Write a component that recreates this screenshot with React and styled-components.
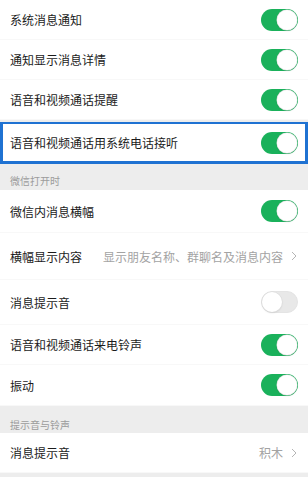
import React from 'react'
import styled, { createGlobalStyle } from 'styled-components'

const GlobalStyle = createGlobalStyle`
  html, body {
    margin: 0;
    padding: 0;
    background: #ededed;
  }
  body {
    font-family: "Noto Sans CJK SC", "Noto Sans", sans-serif;
    -webkit-font-smoothing: antialiased;
  }
`

const Page = styled.div`
  width: 308px;
  height: 477px;
  overflow: hidden;
  background: #ededed;
`

const Row = styled.div`
  box-sizing: border-box;
  height: ${p => p.h || 40}px;
  display: flex;
  align-items: center;
  justify-content: space-between;
  padding: 0 10px;
  background: #fff;
  border-bottom: 1px solid #f8f8f8;
`

const HighlightRow = styled(Row)`
  height: 42px;
  margin-top: 2px;
  padding: 0 7px;
  border: 3px solid #1f72d2;
  border-top-width: 2.5px;
`

const Label = styled.span`
  font-size: 12px;
  color: #1b1b1b;
  white-space: nowrap;
`

const Value = styled.span`
  display: flex;
  align-items: center;
  gap: 8px;
  font-size: 12px;
  color: #a3a3a3;
  white-space: nowrap;
  margin-right: 1px;
`

const Header = styled.div`
  box-sizing: border-box;
  height: ${p => p.h || 26}px;
  padding: ${p => p.pt || 10}px 10px 0;
  font-size: 10px;
  line-height: 14px;
  color: #9c9c9c;
  background: #ededed;
`

const Track = styled.div`
  position: relative;
  box-sizing: border-box;
  width: 37px;
  height: 22px;
  border-radius: 11px;
  background: ${p => (p.on ? '#1ab15b' : '#e8e8e8')};
  border: ${p => (p.on ? 'none' : '1px solid #e4e4e4')};
`

const Knob = styled.div`
  position: absolute;
  top: ${p => (p.on ? 1 : 0)}px;
  ${p => (p.on ? 'right: 1px;' : 'left: 0;')}
  width: 20px;
  height: 20px;
  border-radius: 50%;
  background: #fff;
  box-shadow: 0 0 0 0.5px #dcdcdc, 0 1px 2px rgba(0, 0, 0, 0.12);
`

const Toggle = ({ on }) => (
  <Track on={on}>
    <Knob on={on} />
  </Track>
)

const Chevron = () => (
  <svg width="6" height="10" viewBox="0 0 6 10">
    <path d="M1 1 L5 5 L1 9" fill="none" stroke="#b5b5b5" strokeWidth="1" />
  </svg>
)

const App = () => (
  <Page>
    <GlobalStyle />
    <Row h={40}>
      <Label>系统消息通知</Label>
      <Toggle on />
    </Row>
    <Row h={40}>
      <Label>通知显示消息详情</Label>
      <Toggle on />
    </Row>
    <Row h={40}>
      <Label>语音和视频通话提醒</Label>
      <Toggle on />
    </Row>
    <HighlightRow>
      <Label>语音和视频通话用系统电话接听</Label>
      <Toggle on />
    </HighlightRow>
    <Header h={26} pt={10}>微信打开时</Header>
    <Row h={43}>
      <Label>微信内消息横幅</Label>
      <Toggle on />
    </Row>
    <Row h={47}>
      <Label>横幅显示内容</Label>
      <Value>
        显示朋友名称、群聊名及消息内容
        <Chevron />
      </Value>
    </Row>
    <Row h={45}>
      <Label>消息提示音</Label>
      <Toggle />
    </Row>
    <Row h={40}>
      <Label>语音和视频通话来电铃声</Label>
      <Toggle on />
    </Row>
    <Row h={41}>
      <Label>振动</Label>
      <Toggle on />
    </Row>
    <Header h={27} pt={12}>提示音与铃声</Header>
    <Row h={40}>
      <Label>消息提示音</Label>
      <Value>
        积木
        <Chevron />
      </Value>
    </Row>
  </Page>
)

export default App
